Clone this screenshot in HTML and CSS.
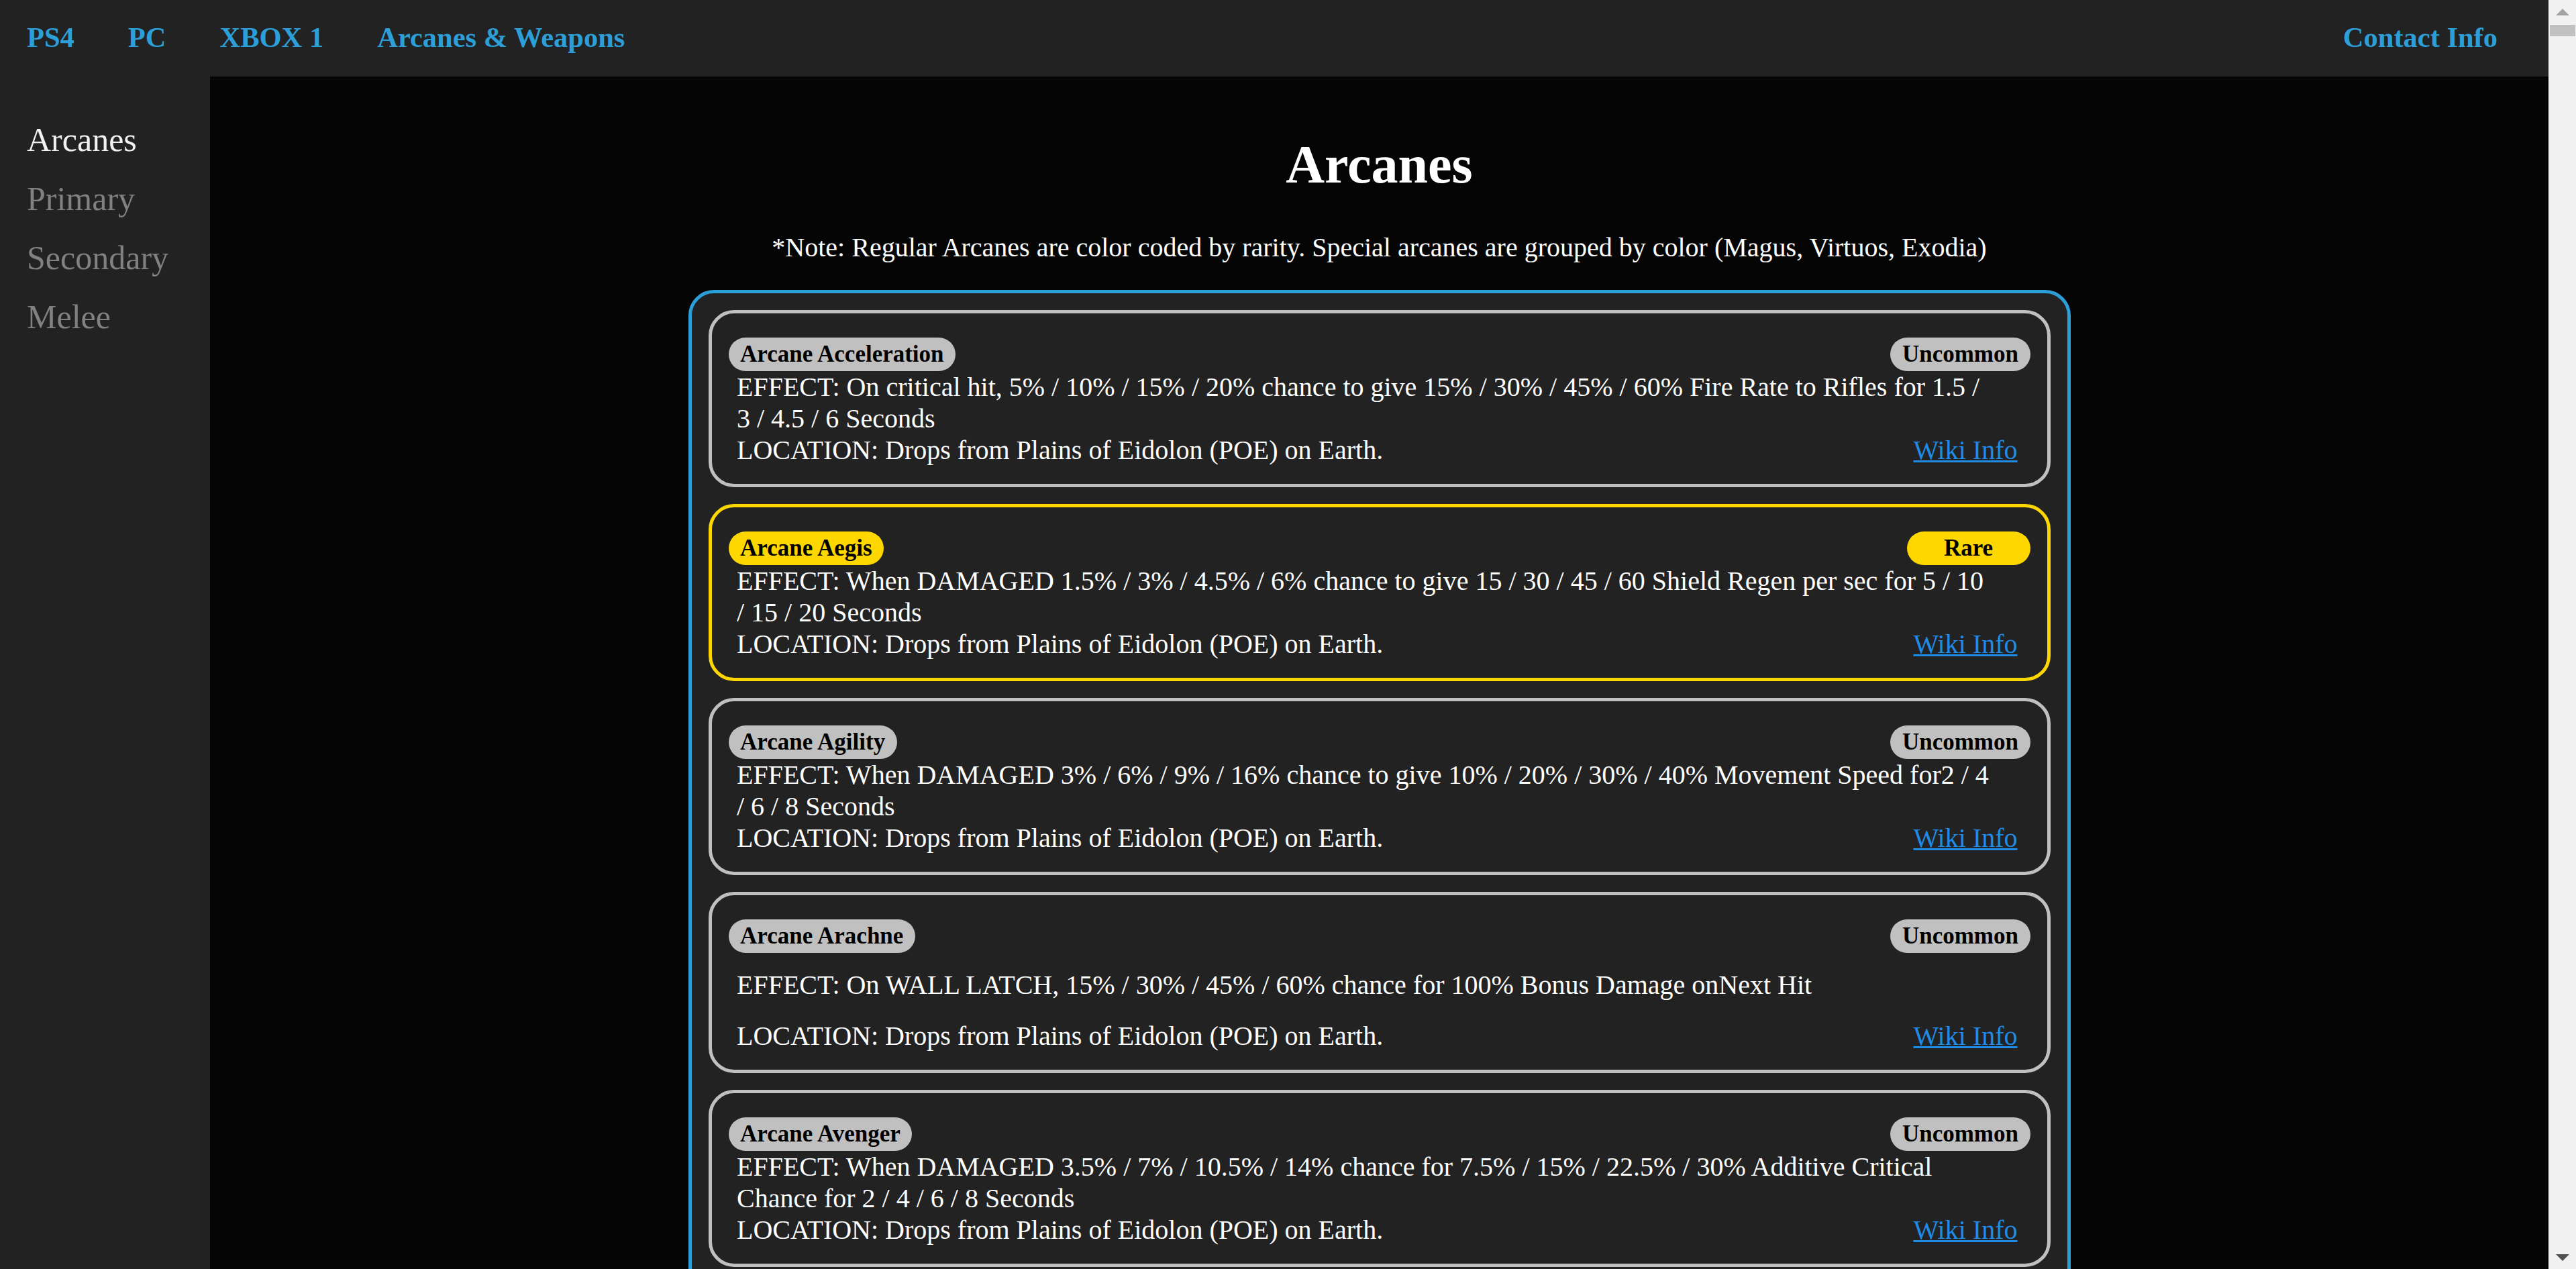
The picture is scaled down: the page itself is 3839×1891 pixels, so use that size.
FILE: index.html
```html
<!DOCTYPE html>
<html lang="en">
<head>
<meta charset="utf-8">
<title>Arcanes</title>
<link rel="stylesheet" href="styles.css">
</head>
<body>
<div class="screen">
  <div class="page">
    <header class="topnav">
      <nav class="platforms">
        <a href="#" class="nav-link">PS4</a>
        <a href="#" class="nav-link">PC</a>
        <a href="#" class="nav-link">XBOX 1</a>
        <a href="#" class="nav-link">Arcanes &amp; Weapons</a>
      </nav>
      <a href="#" class="nav-link contact">Contact Info</a>
    </header>
    <div class="layout">
      <aside class="sidebar">
        <a href="#" class="side-link active">Arcanes</a>
        <a href="#" class="side-link">Primary</a>
        <a href="#" class="side-link">Secondary</a>
        <a href="#" class="side-link">Melee</a>
      </aside>
      <main class="content">
        <h1 class="title">Arcanes</h1>
        <p class="note">*Note: Regular Arcanes are color coded by rarity. Special arcanes are grouped by color (Magus, Virtuos, Exodia)</p>
        <section class="arcane-list">
          <article class="arcane-card">
            <div class="card-head">
              <span class="badge">Arcane Acceleration</span>
              <span class="badge rarity">Uncommon</span>
            </div>
            <div class="card-body">
              <p class="effect">EFFECT: On critical hit, 5% / 10% / 15% / 20% chance to give 15% / 30% / 45% / 60% Fire Rate to Rifles for 1.5 / 3 / 4.5 / 6 Seconds</p>
              <div class="location-row">
                <span class="location">LOCATION: Drops from Plains of Eidolon (POE) on Earth.</span>
                <a href="#" class="wiki">Wiki Info</a>
              </div>
            </div>
          </article>
          <article class="arcane-card rare">
            <div class="card-head">
              <span class="badge">Arcane Aegis</span>
              <span class="badge rarity">Rare</span>
            </div>
            <div class="card-body">
              <p class="effect">EFFECT: When DAMAGED 1.5% / 3% / 4.5% / 6% chance to give 15 / 30 / 45 / 60 Shield Regen per sec for 5 / 10 / 15 / 20 Seconds</p>
              <div class="location-row">
                <span class="location">LOCATION: Drops from Plains of Eidolon (POE) on Earth.</span>
                <a href="#" class="wiki">Wiki Info</a>
              </div>
            </div>
          </article>
          <article class="arcane-card">
            <div class="card-head">
              <span class="badge">Arcane Agility</span>
              <span class="badge rarity">Uncommon</span>
            </div>
            <div class="card-body">
              <p class="effect">EFFECT: When DAMAGED 3% / 6% / 9% / 16% chance to give 10% / 20% / 30% / 40% Movement Speed for2 / 4 / 6 / 8 Seconds</p>
              <div class="location-row">
                <span class="location">LOCATION: Drops from Plains of Eidolon (POE) on Earth.</span>
                <a href="#" class="wiki">Wiki Info</a>
              </div>
            </div>
          </article>
          <article class="arcane-card">
            <div class="card-head">
              <span class="badge">Arcane Arachne</span>
              <span class="badge rarity">Uncommon</span>
            </div>
            <div class="card-body">
              <p class="effect single">EFFECT: On WALL LATCH, 15% / 30% / 45% / 60% chance for 100% Bonus Damage onNext Hit</p>
              <div class="location-row">
                <span class="location">LOCATION: Drops from Plains of Eidolon (POE) on Earth.</span>
                <a href="#" class="wiki">Wiki Info</a>
              </div>
            </div>
          </article>
          <article class="arcane-card">
            <div class="card-head">
              <span class="badge">Arcane Avenger</span>
              <span class="badge rarity">Uncommon</span>
            </div>
            <div class="card-body">
              <p class="effect">EFFECT: When DAMAGED 3.5% / 7% / 10.5% / 14% chance for 7.5% / 15% / 22.5% / 30% Additive Critical Chance for 2 / 4 / 6 / 8 Seconds</p>
              <div class="location-row">
                <span class="location">LOCATION: Drops from Plains of Eidolon (POE) on Earth.</span>
                <a href="#" class="wiki">Wiki Info</a>
              </div>
            </div>
          </article>
        </section>
      </main>
    </div>
  </div>
  <div class="scrollbar" aria-hidden="true">
    <div class="sb-button">
      <svg width="20" height="10" viewBox="0 0 20 10"><path d="M0 10 L10 0 L20 10 Z" fill="#a3a3a3"/></svg>
    </div>
    <div class="sb-thumb"></div>
    <div class="sb-track"></div>
    <div class="sb-button">
      <svg width="20" height="10" viewBox="0 0 20 10"><path d="M0 0 L20 0 L10 10 Z" fill="#505050"/></svg>
    </div>
  </div>
</div>
</body>
</html>
```

FILE: styles.css
```css
html, body {
  margin: 0;
  height: 100%;
}

body {
  font-family: "Liberation Serif", "Times New Roman", serif;
  background: #050505;
  overflow: hidden;
}

.screen {
  display: flex;
  height: 100vh;
}

.page {
  flex: 1;
  min-width: 0;
  display: flex;
  flex-direction: column;
  overflow: hidden;
}

/* top navigation */
.topnav {
  flex-shrink: 0;
  height: 114px;
  box-sizing: border-box;
  background: #222222;
  display: flex;
  justify-content: space-between;
  align-items: flex-start;
  padding-top: 31px;
  padding-right: 36px;
}

.platforms {
  display: flex;
}

.nav-link {
  font-size: 42.5px;
  font-weight: bold;
  color: #2d9fd8;
  text-decoration: none;
  padding: 0 40px;
}

/* body layout */
.layout {
  flex: 1;
  min-height: 0;
  display: flex;
  overflow: hidden;
}

.sidebar {
  width: 313px;
  flex-shrink: 0;
  box-sizing: border-box;
  background: #222222;
  padding-top: 50px;
  display: flex;
  flex-direction: column;
}

.side-link {
  font-size: 50px;
  color: #818181;
  text-decoration: none;
  padding: 15px 40px;
}

.side-link.active {
  color: #f1f1f1;
}

.content {
  flex: 1;
  min-width: 0;
  padding-top: 32px;
  color: #ffffff;
}

.title {
  font-size: 80px;
  font-weight: bold;
  text-align: center;
  margin: 54px 0;
}

.note {
  font-size: 40px;
  text-align: center;
  margin: 40px 0;
}

/* arcane list */
.arcane-list {
  width: 2060px;
  box-sizing: border-box;
  margin: 0 auto;
  border: 5px solid #2d9fd8;
  border-radius: 38px;
  padding: 25px;
  background: #222222;
}

.arcane-card {
  border: 5px solid #c0c0c0;
  border-radius: 38px;
  padding: 36px 25px 27px;
  margin-bottom: 25px;
}

.arcane-card.rare {
  border-color: #ffd700;
}

.card-head {
  display: flex;
  justify-content: space-between;
  align-items: flex-start;
}

.badge {
  font-size: 35px;
  font-weight: bold;
  color: #000000;
  background: #c0c0c0;
  padding: 5px 17.5px;
  border-radius: 25px;
}

.rare .badge {
  background: #ffd700;
}

.badge.rarity {
  min-width: 149px;
  text-align: center;
}

.card-body {
  font-size: 40px;
  padding: 0 19px 0 12.5px;
}

.effect {
  margin: 0;
  max-width: 1875px;
}

.effect.single {
  margin: 24px 0 29px;
}

.location-row {
  display: flex;
  justify-content: space-between;
  align-items: baseline;
}

.wiki {
  color: #1f8ce6;
  text-decoration: underline;
  text-decoration-thickness: 3px;
}

/* window scrollbar */
.scrollbar {
  width: 41px;
  flex-shrink: 0;
  background: #f1f1f1;
  display: flex;
  flex-direction: column;
  align-items: center;
}

.sb-button {
  width: 100%;
  height: 35px;
  display: flex;
  align-items: center;
  justify-content: center;
}

.sb-thumb {
  width: 38px;
  height: 17px;
  margin-top: 2px;
  background: #c1c1c1;
}

.sb-track {
  flex: 1;
}
```
